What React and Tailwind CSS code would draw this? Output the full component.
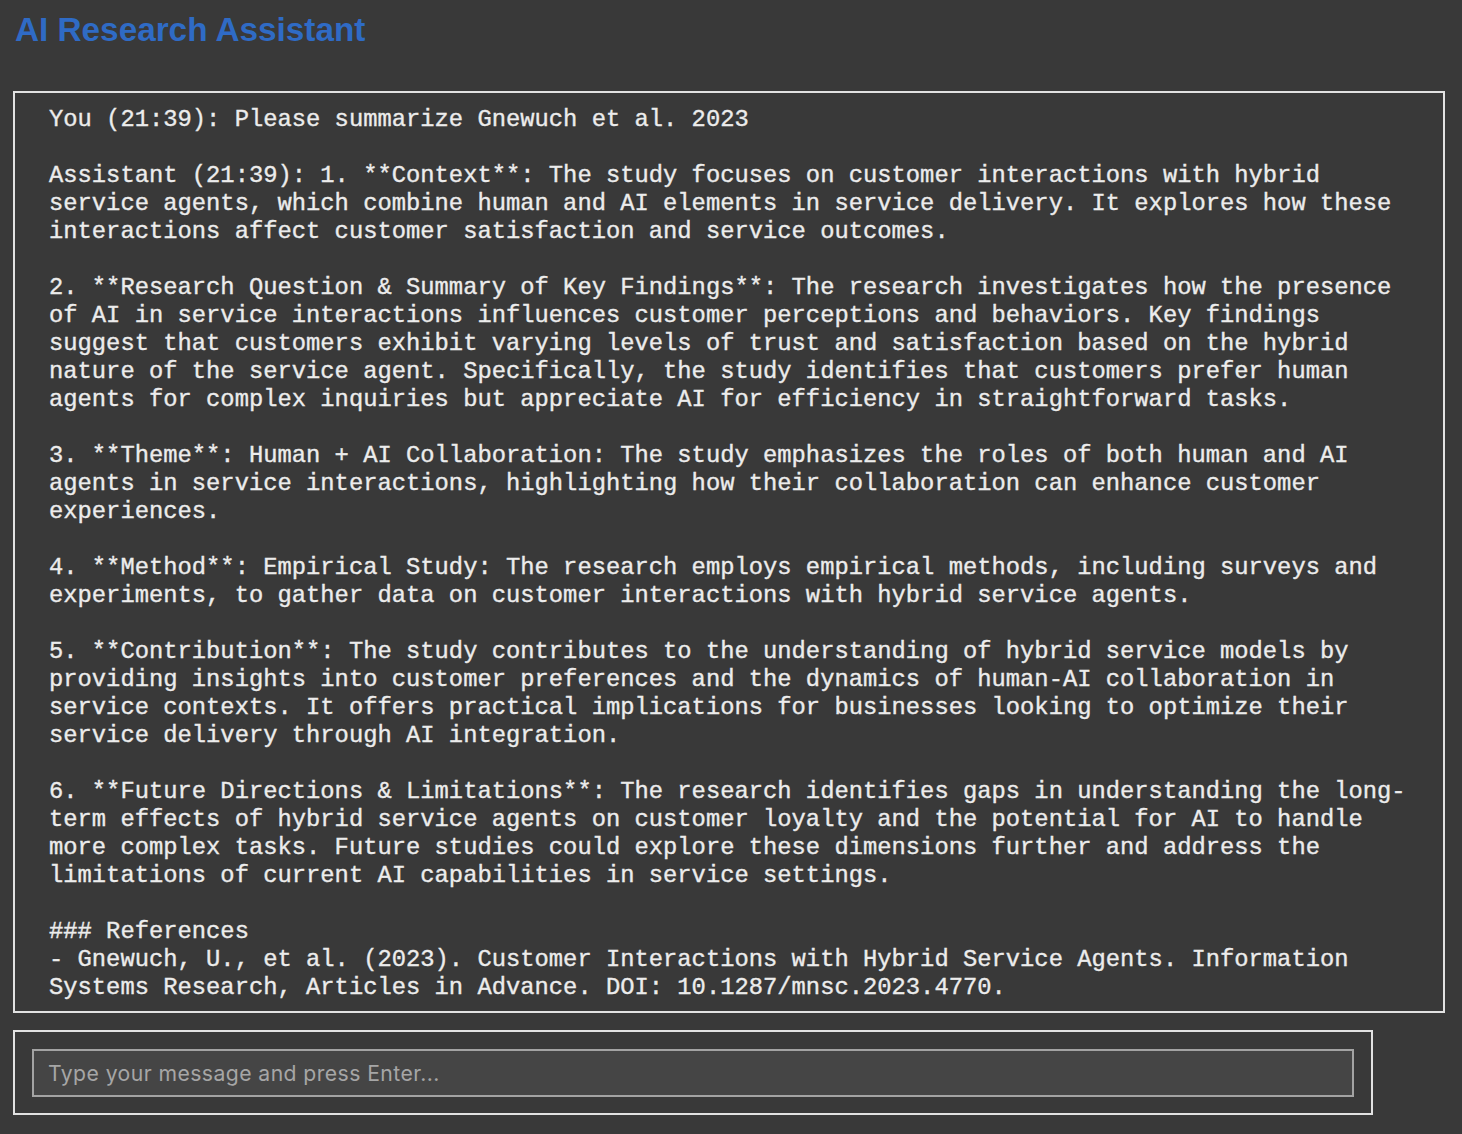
import { useState } from 'react';

const transcript = [
  'You (21:39): Please summarize Gnewuch et al. 2023',
  '',
  'Assistant (21:39): 1. **Context**: The study focuses on customer interactions with hybrid',
  'service agents, which combine human and AI elements in service delivery. It explores how these',
  'interactions affect customer satisfaction and service outcomes.',
  '',
  '2. **Research Question & Summary of Key Findings**: The research investigates how the presence',
  'of AI in service interactions influences customer perceptions and behaviors. Key findings',
  'suggest that customers exhibit varying levels of trust and satisfaction based on the hybrid',
  'nature of the service agent. Specifically, the study identifies that customers prefer human',
  'agents for complex inquiries but appreciate AI for efficiency in straightforward tasks.',
  '',
  '3. **Theme**: Human + AI Collaboration: The study emphasizes the roles of both human and AI',
  'agents in service interactions, highlighting how their collaboration can enhance customer',
  'experiences.',
  '',
  '4. **Method**: Empirical Study: The research employs empirical methods, including surveys and',
  'experiments, to gather data on customer interactions with hybrid service agents.',
  '',
  '5. **Contribution**: The study contributes to the understanding of hybrid service models by',
  'providing insights into customer preferences and the dynamics of human-AI collaboration in',
  'service contexts. It offers practical implications for businesses looking to optimize their',
  'service delivery through AI integration.',
  '',
  '6. **Future Directions & Limitations**: The research identifies gaps in understanding the long-',
  'term effects of hybrid service agents on customer loyalty and the potential for AI to handle',
  'more complex tasks. Future studies could explore these dimensions further and address the',
  'limitations of current AI capabilities in service settings.',
  '',
  '### References',
  '- Gnewuch, U., et al. (2023). Customer Interactions with Hybrid Service Agents. Information',
  'Systems Research, Articles in Advance. DOI: 10.1287/mnsc.2023.4770.',
].join('\n');

export default function App() {
  const [draft, setDraft] = useState('');

  return (
    <div className="min-h-screen bg-[#393939] px-[13px] pt-[10px] pb-[19px]">
      <h1 className="pl-[2px] font-['Liberation_Sans',Arial,sans-serif] text-[33.3px] font-bold leading-[40px] text-[#2f6bc5]">
        AI Research Assistant
      </h1>

      <div className="mt-[41px] h-[922px] w-[1432px] overflow-hidden border-2 border-[#e2e2e2] px-[34px] pt-[13px]">
        <div className="whitespace-pre font-['Liberation_Mono','Courier_New',monospace] text-[23.8px] leading-[28px] text-[#ececec] [-webkit-text-stroke:0.35px_#ececec]">
          {transcript}
        </div>
      </div>

      <div className="mt-[17px] w-[1360px] border-2 border-[#e2e2e2] p-[17px] pb-[16px]">
        <input
          value={draft}
          onChange={(e) => setDraft(e.target.value)}
          placeholder="Type your message and press Enter..."
          className="block h-[48px] w-full border-2 border-[#a3a3a3] bg-[#454545] px-[14px] font-['Inter','Liberation_Sans',sans-serif] text-[21.2px] tracking-[0.02em] text-[#e8e8e8] outline-none placeholder:text-[#a6a6a6]"
        />
      </div>
    </div>
  );
}
